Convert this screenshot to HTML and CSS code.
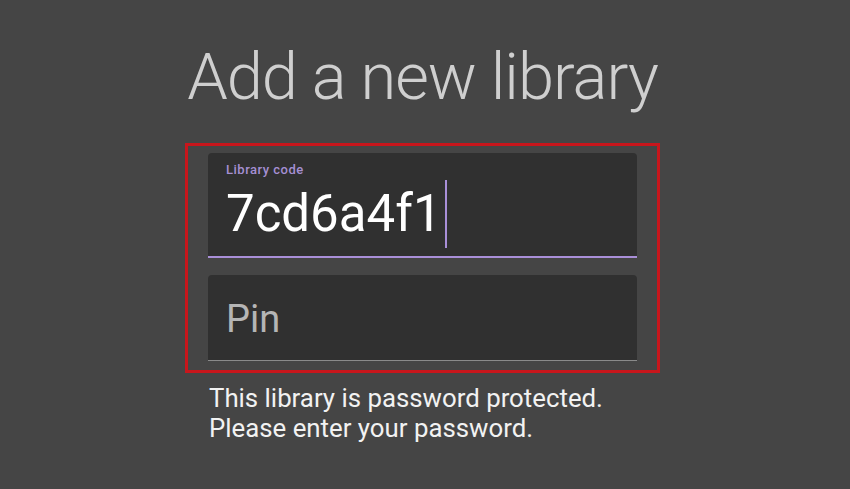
FILE: index.html
```html
<!DOCTYPE html>
<html>
  <head>
    <meta charset="UTF-8" />
    <title>Add a new library</title>
    <link rel="stylesheet" href="styles.css">
  </head>
  <body>
    <div class="page">
      <h1 class="title">Add a new library</h1>

      <!-- 入力欄を赤枠で囲む -->
      <div class="highlight">
        <div class="field field-active">
          <div class="field-label">Library code</div>
          <div class="field-value">7cd6a4f1<span class="caret"></span></div>
        </div>
        <div class="field">
          <div class="field-placeholder">Pin</div>
        </div>
      </div>

      <p class="helper">This library is password protected.<br>Please enter your password.</p>
    </div>
  </body>
</html>
```

FILE: styles.css
```css
html,
body {
  margin: 0;
  height: 100%;
  background-color: #454545;
  font-family: Roboto, "Liberation Sans", sans-serif;
  overflow: hidden;
}

.page {
  width: 475px;
  margin-left: 185px;
  padding-top: 44px;
}

.title {
  margin: 0;
  font-size: 65px;
  font-weight: 300;
  line-height: 66px;
  letter-spacing: -1px;
  color: #cfcfcf;
  text-align: center;
  white-space: nowrap;
}

/* 赤い強調枠 */
.highlight {
  margin-top: 33px;
  border: 3px solid #c8161c;
  padding: 7px 20px 9px;
  display: flex;
  flex-direction: column;
  gap: 17px;
}

.field {
  background-color: #303030;
  border-radius: 4px 4px 0 0;
  border-bottom: 1px solid #8a8a8a;
  height: 85px;
  padding-left: 18px;
  display: flex;
  align-items: center;
}

.field-active {
  height: 103px;
  border-bottom: 2px solid #a98fd8;
  flex-direction: column;
  align-items: flex-start;
  justify-content: flex-start;
}

.field-label {
  margin-top: 9px;
  font-size: 13px;
  font-weight: 500;
  letter-spacing: 0.5px;
  line-height: 16px;
  color: #a58fd3;
}

.field-value {
  margin-top: 1px;
  font-size: 51px;
  line-height: 70px;
  color: #ffffff;
  display: flex;
  align-items: center;
}

.caret {
  display: inline-block;
  width: 2px;
  height: 68px;
  margin-left: 3px;
  background-color: #a98fd8;
}

.field-placeholder {
  font-size: 38px;
  color: #b5b5b5;
  padding-top: 2px;
}

.helper {
  margin: 10px 0 0 24px;
  font-size: 25.8px;
  line-height: 30px;
  color: #f2f2f2;
}
```
